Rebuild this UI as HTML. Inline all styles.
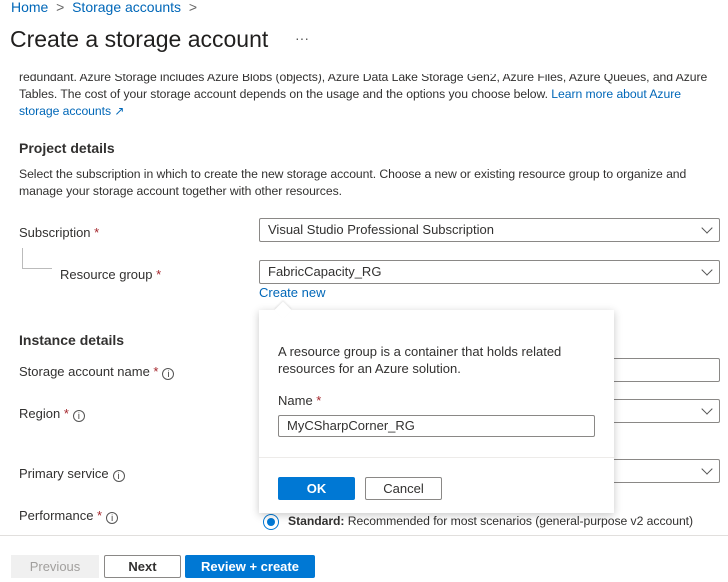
<!DOCTYPE html>
<html><head><style>
*{box-sizing:border-box;margin:0;padding:0}
body{width:728px;height:582px;overflow:hidden;background:#fff;font-family:"Liberation Sans",sans-serif;font-size:13px;color:#323130;position:relative}
.a{position:absolute;white-space:nowrap}
.lnk{color:#0067b8}
.req{color:#a4262c}
.dd{position:absolute;border:1px solid #8a8886;height:24px;border-radius:2px;padding-left:8px;line-height:22px;background:#fff}
.chev{position:absolute;right:8px;top:5px;width:8px;height:8px;border-right:1px solid #555;border-bottom:1px solid #555;transform:rotate(45deg)}
.info{display:inline-block;width:12px;height:12px;border:1px solid #555;border-radius:50%;font-size:9px;line-height:10px;text-align:center;vertical-align:-1px;margin-left:4px}
.b{font-weight:bold;font-size:14px}
.sm{font-size:12.2px;letter-spacing:-0.05px}
</style></head><body>
<div class="a lnk" style="left:11px;top:-1px;font-size:14px">Home <span style="color:#666">&nbsp;&gt;&nbsp;</span> Storage accounts <span style="color:#666">&nbsp;&gt;</span></div>
<div class="a" style="left:10px;top:26px;font-size:23px;color:#201f1e">Create a storage account</div>
<div class="a" style="left:295px;top:30px;font-size:14px;color:#555">···</div>
<div class="a sm" style="left:19px;top:74px;line-height:17px;overflow:hidden;height:46px;width:709px">
<div style="margin-top:-5px">redundant. Azure Storage includes Azure Blobs (objects), Azure Data Lake Storage Gen2, Azure Files, Azure Queues, and Azure</div>
<div>Tables. The cost of your storage account depends on the usage and the options you choose below. <span class="lnk">Learn more about Azure</span></div>
<div class="lnk">storage accounts ↗</div></div>
<div class="a b" style="left:19px;top:140px">Project details</div>
<div class="a sm" style="left:19px;top:166px;line-height:17px">Select the subscription in which to create the new storage account. Choose a new or existing resource group to organize and<br>manage your storage account together with other resources.</div>
<div class="a" style="left:19px;top:225px">Subscription <span class="req">*</span></div>
<div class="dd" style="left:259px;top:218px;width:461px">Visual Studio Professional Subscription<div class="chev"></div></div>
<div class="a" style="left:22px;top:248px;width:30px;height:21px;border-left:1px solid #bbb;border-bottom:1px solid #bbb"></div>
<div class="a" style="left:60px;top:267px">Resource group <span class="req">*</span></div>
<div class="dd" style="left:259px;top:260px;width:461px">FabricCapacity_RG<div class="chev"></div></div>
<div class="a lnk" style="left:259px;top:285px">Create new</div>
<div class="a b" style="left:19px;top:332px">Instance details</div>
<div class="a" style="left:19px;top:364px">Storage account name <span class="req">*</span><span class="info">i</span></div>
<div class="dd" style="left:560px;top:358px;width:160px"></div>
<div class="a" style="left:19px;top:406px">Region <span class="req">*</span><span class="info">i</span></div>
<div class="dd" style="left:560px;top:399px;width:160px"><div class="chev"></div></div>
<div class="a" style="left:19px;top:466px">Primary service<span class="info">i</span></div>
<div class="dd" style="left:560px;top:459px;width:160px"><div class="chev"></div></div>
<div class="a" style="left:19px;top:508px">Performance <span class="req">*</span><span class="info">i</span></div>
<div class="a" style="left:263px;top:514px;width:16px;height:16px;border:1px solid #0078d4;border-radius:50%"><div style="margin:3px;width:8px;height:8px;background:#0078d4;border-radius:50%"></div></div>
<div class="a sm" style="left:288px;top:514px"><b>Standard:</b> Recommended for most scenarios (general-purpose v2 account)</div>
<div class="a" style="left:0;top:535px;width:728px;height:47px;background:#fff;border-top:1px solid #e1dfdd"></div>
<div class="a" style="left:11px;top:555px;width:88px;height:23px;background:#f0f0f0;color:#a19f9d;text-align:center;line-height:23px">Previous</div>
<div class="a" style="left:104px;top:555px;width:77px;height:23px;border:1px solid #8a8886;border-radius:2px;text-align:center;line-height:21px;font-weight:bold;color:#323130">Next</div>
<div class="a" style="left:185px;top:555px;width:130px;height:23px;background:#0078d4;border-radius:2px;text-align:center;line-height:23px;color:#fff;font-weight:bold">Review + create</div>
<div class="a" style="left:259px;top:310px;width:355px;height:203px;background:#fff;box-shadow:0 2px 8px rgba(0,0,0,.22)"></div>
<div class="a" style="left:277px;top:304px;width:12px;height:12px;background:#fff;transform:rotate(45deg);box-shadow:-1px -1px 2px rgba(0,0,0,.1)"></div>
<div class="a" style="left:278px;top:343px;line-height:17px">A resource group is a container that holds related<br>resources for an Azure solution.</div>
<div class="a" style="left:278px;top:393px">Name <span class="req">*</span></div>
<div class="dd" style="left:278px;top:415px;width:317px;height:22px;line-height:20px">MyCSharpCorner_RG</div>
<div class="a" style="left:259px;top:457px;width:355px;border-top:1px solid #edebe9"></div>
<div class="a" style="left:278px;top:477px;width:77px;height:23px;background:#0078d4;border-radius:2px;color:#fff;font-weight:bold;text-align:center;line-height:23px">OK</div>
<div class="a" style="left:365px;top:477px;width:77px;height:23px;border:1px solid #8a8886;border-radius:2px;text-align:center;line-height:21px">Cancel</div>
</body></html>
